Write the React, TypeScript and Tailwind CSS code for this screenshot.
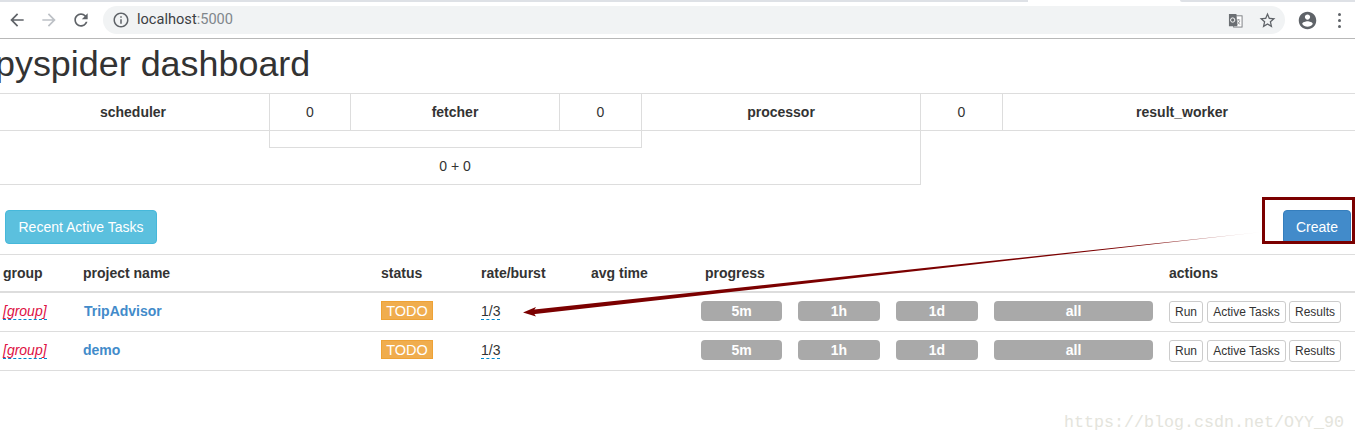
import React from "react";

const font = { fontFamily: '"Liberation Sans", Arial, sans-serif' };

const Icon = ({ d, size = 20, color = "#5f6368" }: { d: string; size?: number; color?: string }) => (
  <svg width={size} height={size} viewBox="0 0 24 24" fill={color}>
    <path d={d} />
  </svg>
);

const BrowserBar = () => (
  <div className="h-[39px] border-b border-[#b8b8b8] bg-white flex flex-col">
    <div className="h-[2px] flex">
      <div className="w-[1028px] bg-[#dee1e6]" />
      <div className="w-[152px]" />
      <div className="flex-1 bg-[#dee1e6] rounded-bl-[3px]" />
    </div>
    <div className="flex items-center h-[36px]">
      <div className="w-[103px] flex items-center pl-[7px] gap-[12px]">
        <Icon d="M20 11H7.83l5.59-5.59L12 4l-8 8 8 8 1.41-1.41L7.83 13H20v-2z" />
        <Icon d="M4 11h12.17l-5.59-5.59L12 4l8 8-8 8-1.41-1.41L16.17 13H4v-2z" color="#bdc1c6" />
        <Icon d="M17.65 6.35C16.2 4.9 14.21 4 12 4c-4.42 0-7.99 3.58-7.99 8s3.57 8 7.99 8c3.73 0 6.84-2.55 7.73-6h-2.08c-.82 2.33-3.04 4-5.65 4-3.31 0-6-2.69-6-6s2.69-6 6-6c1.66 0 3.14.69 4.22 1.78L13 11h7V4l-2.35 2.35z" />
      </div>
      <div className="w-[1182px] h-[28px] rounded-[14px] bg-[#f1f3f4] flex items-center pl-[9px] pr-[8px]">
        <Icon size={18} d="M11 7h2v2h-2zm0 4h2v6h-2zm1-9C6.48 2 2 6.48 2 12s4.48 10 10 10 10-4.48 10-10S17.52 2 12 2zm0 18c-4.41 0-8-3.59-8-8s3.59-8 8-8 8 3.59 8 8-3.59 8-8 8z" />
        <span className="ml-[7px] text-[14.6px] text-[#3c4043]" style={{ fontFamily: "Roboto, sans-serif" }}>
          localhost<span className="text-[#80868b]">:5000</span>
        </span>
        <div className="ml-auto flex items-center gap-[15px]">
          <svg width="15" height="15" viewBox="0 0 16 16">
            <rect x="6" y="3" width="9" height="12" fill="#fff" stroke="#7a7d80" />
            <path d="M9.5 7.5h3.5M11 6.5v1M9.8 12.5l3-4M10 9c.6 1.4 1.8 2.6 3 3" stroke="#7a7d80" strokeWidth="0.8" fill="none" />
            <path d="M1 1h8l1 13H1z" fill="#6b6f73" />
            <circle cx="5" cy="7.5" r="2.3" fill="none" stroke="#fff" strokeWidth="1" />
          </svg>
          <Icon size={19} d="M22 9.24l-7.19-.62L12 2 9.19 8.63 2 9.24l5.46 4.73L5.82 21 12 17.27 18.18 21l-1.63-7.03L22 9.24zM12 15.4l-3.76 2.27 1-4.28-3.32-2.88 4.38-.38L12 6.1l1.71 4.04 4.38.38-3.32 2.88 1 4.28L12 15.4z" />
        </div>
      </div>
      <div className="flex items-center pl-[12px]">
        <Icon size={21} d="M12 2C6.48 2 2 6.48 2 12s4.48 10 10 10 10-4.48 10-10S17.52 2 12 2zm0 3c1.66 0 3 1.34 3 3s-1.34 3-3 3-3-1.34-3-3 1.34-3 3-3zm0 14.2c-2.5 0-4.71-1.28-6-3.22.03-1.99 4-3.08 6-3.08 1.99 0 5.97 1.09 6 3.08-1.29 1.94-3.5 3.22-6 3.22z" />
        <div className="ml-[20px] flex flex-col gap-[3px]">
          <span className="w-[3px] h-[3px] rounded-full bg-[#5f6368]" />
          <span className="w-[3px] h-[3px] rounded-full bg-[#5f6368]" />
          <span className="w-[3px] h-[3px] rounded-full bg-[#5f6368]" />
        </div>
      </div>
    </div>
  </div>
);

const StatusGrid = () => (
  <div className="grid grid-cols-[269px_81px_209px_82px_279px_82px_1fr] grid-rows-[38px_17px_37px] text-[14px] text-[#333]">
    <div className="border-y border-[#ddd] flex items-center justify-center font-bold pr-[3px]">scheduler</div>
    <div className="border-y border-l border-[#ddd] flex items-center justify-center">0</div>
    <div className="border-y border-l border-[#ddd] flex items-center justify-center font-bold">fetcher</div>
    <div className="border-y border-l border-[#ddd] flex items-center justify-center">0</div>
    <div className="border-y border-l border-[#ddd] flex items-center justify-center font-bold">processor</div>
    <div className="border-y border-l border-[#ddd] flex items-center justify-center">0</div>
    <div className="border-y border-l border-[#ddd] flex items-center justify-center font-bold pl-[6px]">result_worker</div>
    <div />
    <div className="col-span-3 border-x border-b border-[#ddd] w-[373px]" />
    <div className="border-r border-[#ddd] w-[280px]" />
    <div className="col-span-2" />
    <div className="col-span-5 w-[921px] border-b border-r border-[#ddd] flex items-center justify-center pr-[10px]">0 + 0</div>
  </div>
);

const Editable = ({ children, className = "" }: { children: React.ReactNode; className?: string }) => (
  <span className={`border-b border-dashed border-[#0088cc] ${className}`}>{children}</span>
);

const ProgressBar = ({ label, width }: { label: string; width: string }) => (
  <div className={`${width} h-[20px] rounded-[4px] bg-[#a9a9a9] text-white font-bold text-[14px] leading-[20px] text-center`}>{label}</div>
);

const ActionButton = ({ label, width }: { label: string; width: string }) => (
  <button className={`${width} h-[22px] rounded-[3px] border border-[#ccc] bg-white text-[12px] text-[#333]`}>{label}</button>
);

const ProjectRow = ({ name, nameClass }: { name: string; nameClass: string }) => (
  <div className="h-[39px] border-b border-[#ddd] pl-[3px] pt-[8px] grid grid-cols-[80px_298px_100px_110px_110px_468px_1fr] items-start text-[14px] leading-[20px] text-[#333]">
    <div>
      <Editable className="italic text-[#dd1144]">[group]</Editable>
    </div>
    <a className={`font-bold text-[#428bca] ${nameClass}`}>{name}</a>
    <div>
      <span className="block w-[52px] h-[19px] bg-[#f0ad4e] border border-[#eea236] text-white text-center leading-[19px] text-[14.5px]">TODO</span>
    </div>
    <div>
      <Editable>1/3</Editable>
    </div>
    <div />
    <div className="flex gap-4">
      <ProgressBar label="5m" width="w-[81px]" />
      <ProgressBar label="1h" width="w-[82px]" />
      <ProgressBar label="1d" width="w-[82px]" />
      <ProgressBar label="all" width="w-[159px]" />
    </div>
    <div className="flex gap-[3px]">
      <ActionButton label="Run" width="w-[34px]" />
      <ActionButton label="Active Tasks" width="w-[79px] ml-[1px]" />
      <ActionButton label="Results" width="w-[52px]" />
    </div>
  </div>
);

/* red box and arrow the blog author drew over the shot */
const Annotation = () => (
  <>
    <div className="absolute left-[1262px] top-[197px] w-[93px] h-[47px] border-[3px] border-[#7b0000]" />
    <svg className="absolute left-0 top-0 pointer-events-none" width="1355" height="443">
      <defs>
        <linearGradient id="fade" gradientUnits="userSpaceOnUse" x1="524" y1="312" x2="1262" y2="232">
          <stop offset="0" stopColor="#7b0000" />
          <stop offset="0.85" stopColor="#7b0000" />
          <stop offset="1" stopColor="#7b0000" stopOpacity="0.1" />
        </linearGradient>
      </defs>
      <polygon points="1262,232 532,309.8 533,314.2" fill="url(#fade)" />
      <polygon points="523,312.5 536,307 533,312 536,316.5" fill="#7b0000" />
    </svg>
  </>
);

export default function App() {
  return (
    <div className="relative w-[1355px] h-[443px] overflow-hidden bg-white" style={font}>
      <BrowserBar />
      <h1 className="h-[54px] -ml-[5px] text-[35.9px] leading-[50px] font-normal text-[#333] whitespace-nowrap">pyspider dashboard</h1>
      <StatusGrid />

      <div className="flex justify-between items-start pl-[5px] pr-[4px] pt-[25px] h-[69px]">
        <button className="w-[152px] h-[34px] rounded-[4px] bg-[#5bc0de] border border-[#46b8da] text-white text-[14px]">Recent Active Tasks</button>
        <button className="w-[68px] h-[34px] rounded-[4px] bg-[#428bca] border border-[#357ebd] text-white text-[14px]">Create</button>
      </div>

      <div className="border-t border-[#ddd]">
        <div className="h-[38px] border-b-2 border-[#ddd] pl-[3px] grid grid-cols-[80px_298px_100px_110px_114px_464px_1fr] items-center text-[14px] font-bold text-[#333]">
          <div>group</div>
          <div>project name</div>
          <div>status</div>
          <div>rate/burst</div>
          <div>avg time</div>
          <div>progress</div>
          <div>actions</div>
        </div>
        <ProjectRow name="TripAdvisor" nameClass="ml-[1px]" />
        <ProjectRow name="demo" nameClass="" />
      </div>

      <div className="absolute left-[1064px] top-[412px] text-[16.67px] leading-[22px] text-[#e4e4dc] whitespace-nowrap" style={{ fontFamily: '"Liberation Mono", monospace' }}>
        https://blog.csdn.net/OYY_90
      </div>
      <Annotation />
    </div>
  );
}
